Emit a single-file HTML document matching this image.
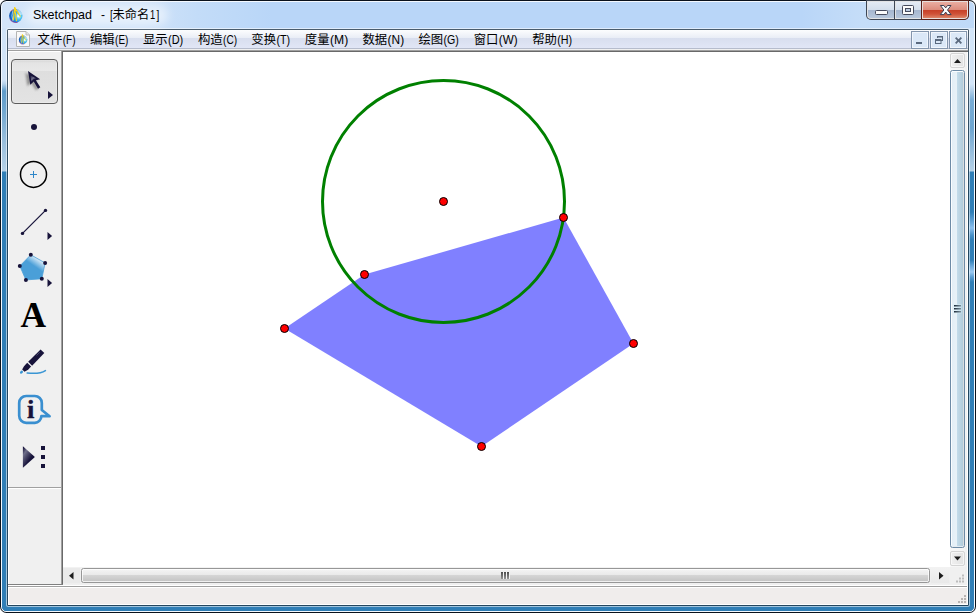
<!DOCTYPE html>
<html><head><meta charset="utf-8"><title>Sketchpad</title>
<style>
html,body{margin:0;padding:0;background:#fff;}
body{width:976px;height:613px;overflow:hidden;position:relative;font-family:"Liberation Sans",sans-serif;font-size:12px;color:#000;}
div,span,svg{position:absolute;box-sizing:border-box;}
.cj{overflow:visible;}
#win{left:0;top:0;width:976px;height:613px;border-radius:6.5px;background:#0a121c;overflow:hidden;}
#hl{left:1px;top:1px;width:974px;height:611px;border-radius:5.5px;background:#f4f9ff;overflow:hidden;}
#glass{left:2px;top:2px;width:972px;height:609px;border-radius:4.5px;overflow:hidden;
 background:linear-gradient(to right,#d3e5f9 0,#d0e3f9 140px,#c3dcf8 195px,#b9d6f8 270px,#b9d6f8 800px,#c5ddf8 860px,#bfd9f7 100%);}
#gl-l{left:0;top:26px;width:5px;height:583px;
 background:linear-gradient(to bottom,#d0e3f7 0px,#d0e3f7 52px,#b5d1ea 56px,#5f9bc9 63px,#6ea5cf 80px,#95bcdb 110px,#b5d1e7 143px,#2f7eb6 144px,#2f7eb6 100%);}
#gl-r{left:967px;top:26px;width:5px;height:583px;
 background:linear-gradient(to bottom,#d3e5f8 0px,#d3e5f8 56px,#b5d1ea 62px,#79add6 72px,#6fa6d0 100px,#95bcdb 122px,#b5d1e7 143px,#2f7eb6 144px,#2f7eb6 184px,#5a9dd2 192px,#8cc0ee 200px,#4a92c9 207px,#2f7eb6 212px,#2f7eb6 232px,#6aa8da 238px,#9ccaf2 244px,#5a9dd2 249px,#2f7eb6 254px,#2f7eb6 100%);}
#gl-b{left:0;top:603px;width:972px;height:6px;background:#2f7eb6;}
#inner-hl{left:6px;top:28px;width:964px;height:579px;border-radius:2.5px;background:rgba(255,255,255,.55);}
#client-w{left:8px;top:30px;width:960px;height:575px;background:#fff;}
#inner-dk{left:7px;top:29px;width:962px;height:577px;border-radius:1.5px;background:linear-gradient(to bottom,#4a5c6c 0,#3d5468 60px,#24465e 143px);}
#client{left:8px;top:30px;width:959px;height:574px;background:#f0f0f0;overflow:hidden;}
/* title */
#ttl{left:33px;top:6px;height:18px;line-height:18px;font-size:12.4px;white-space:pre;color:#000;transform-origin:0 0;}
.glow{left:26px;top:5px;width:142px;height:20px;border-radius:10px;background:rgba(255,255,255,.5);filter:blur(5px);}
/* menu (coords relative to body) */
#menubar{left:8px;top:30px;width:960px;height:18px;background:linear-gradient(to bottom,#fcfdfe 0,#e9edf6 8px,#d8deee 8px,#e1e6f6 18px);}
#mb1{left:8px;top:48px;width:960px;height:1px;background:#b6bccc;}
#mb2{left:8px;top:49px;width:960px;height:1px;background:#f0f0f0;}
#mb3{left:8px;top:50px;width:960px;height:1px;background:#a0a0a0;}
.ml{top:31px;height:16px;line-height:16px;font-size:12px;white-space:pre;transform-origin:0 0;}
.mdi{top:31px;width:18px;height:18px;border:1px solid #8496ad;background:#dbe8f7;box-shadow:inset 0 0 0 1px rgba(255,255,255,.6);}
/* toolbar */
#tb{left:8px;top:51px;width:53px;height:533px;background:#f0f0f0;border-top:1px solid #fff;border-left:1px solid #fff;}
#tb-r1{left:61px;top:51px;width:1px;height:534px;background:#a0a0a0;}
#tb-r2{left:62px;top:51px;width:1px;height:534px;background:#696969;}
#tb-b{left:8px;top:584px;width:55px;height:1px;background:#808080;}
#cv-t{left:62px;top:51px;width:906px;height:1px;background:#696969;}
#canvas{left:63px;top:52px;width:887px;height:516px;background:#fff;}
#vs{left:950px;top:52px;width:17px;height:516px;background:#f4f4f4;}
#hs{left:63px;top:568px;width:887px;height:17px;background:#f0f0f0;}
#sb-corner{left:950px;top:568px;width:18px;height:17px;background:#f0f0f0;}
#rstrip{left:967px;top:52px;width:1px;height:533px;background:#f0f0f0;}
#l585{left:8px;top:585px;width:959px;height:1px;background:#fff;}
#l586{left:8px;top:586px;width:959px;height:1px;background:#a0a0a0;}
#status{left:8px;top:587px;width:959px;height:17px;background:#f0edec;border-top:1px solid #fff;border-left:1px solid #fff;}
/* caption buttons */
#cap{left:866px;top:0;width:103px;height:20px;border-radius:0 0 5px 5px;background:#3d4654;}
#cap-hl{left:867px;top:1px;width:101px;height:18px;border-radius:0 0 4px 4px;background:rgba(255,255,255,.85);}
.cb{top:2px;height:16px;}
#cb-min{left:868px;width:26px;border-radius:0 0 0 3px;background:linear-gradient(to bottom,#e3eaf4 0,#d3deec 8px,#a5b6cf 8px,#b7c7dc 16px);}
#cb-max{left:896px;width:25px;background:linear-gradient(to bottom,#e3eaf4 0,#d3deec 8px,#a5b6cf 8px,#b7c7dc 16px);}
#cb-cls{left:923px;width:44px;border-radius:0 0 3px 0;background:linear-gradient(to bottom,#eaada1 0,#dc8b7c 8px,#c63f27 8px,#cf5238 12px,#dc8468 16px);}
.csep{top:1px;width:1px;height:18px;background:#3d4654;}
#selbtn{left:11px;top:59px;width:47px;height:45px;border:1px solid #5c5c5c;border-radius:4px;
 background:linear-gradient(to bottom,#d4d4d4 0,#e4e4e4 3px,#e8e8e8 11px,#dedede 11px,#e3e3e3 43px);box-shadow:inset 0 0 0 1px rgba(255,255,255,.25);}
#tbsep1{left:8px;top:487px;width:53px;height:1px;background:#a0a0a0;}
#tbsep2{left:8px;top:488px;width:53px;height:1px;background:#fff;}
/* scrollbars */
#vs{left:950px;top:52px;width:17px;height:515px;background:linear-gradient(to right,#f8f8f8 0,#f4f4f4 14px,#f0f0f0 17px);}
#hs{left:63px;top:567px;width:887px;height:18px;background:linear-gradient(to bottom,#f2f2f2 0,#eeeeee 16px,#f0f0f0 18px);}
#sb-corner{left:950px;top:567px;width:17px;height:18px;background:#f0f0f0;}
#rstrip{left:967px;top:52px;width:1px;height:533px;background:#fff;}
.sbtn{border:1px solid #d4d4d4;border-radius:2px;background:linear-gradient(to bottom,#f0f0f0,#e4e4e4);box-shadow:inset 0 0 0 1px rgba(255,255,255,.6);}
#vup{left:950px;top:53px;width:15px;height:15px;background:linear-gradient(to right,#f0f0f0,#e2e2e2);}
#vdn{left:950px;top:551px;width:15px;height:15px;background:linear-gradient(to right,#f0f0f0,#e2e2e2);}
#vth{left:950px;top:70px;width:15px;height:478px;border:1px solid #6e8ba6;border-radius:2.5px;
 background:linear-gradient(to right,#fafdff 0,#fafdff 1px,#e3eef6 1px,#e9f2f8 6px,#c4dcea 6px,#b2cbda 12px,#d9dde0 12px);box-shadow:inset 0 1px 0 0 #fafdff,inset 0 -1px 0 0 #e4ecf2;}
#hlft{left:63px;top:568px;width:17px;height:15px;background:#eaeaea;}
#hrgt{left:931px;top:568px;width:18px;height:15px;background:linear-gradient(to bottom,#f2f2f2,#e9e9e9);}
#hth{left:81px;top:568px;width:849px;height:15px;border:1px solid #979797;border-radius:2.5px;
 background:linear-gradient(to bottom,#f4f4f4 0,#e9e9e9 6px,#d6d6d6 6px,#c2c2c2 13px);box-shadow:inset 0 0 0 1px rgba(255,255,255,.75);}
#cap-cl{left:921px;top:0;width:48px;height:20px;border-radius:0 0 5px 0;background:#5c2118;}

</style></head>
<body>
<div id="win"></div>
<div id="hl"></div>
<div id="glass"><div id="gl-l"></div><div id="gl-r"></div><div id="gl-b"></div></div>
<div id="inner-hl"></div>
<div id="inner-dk"></div>
<div id="client-w"></div><div id="client"></div>
<div id="cap"></div><div id="cap-cl"></div><div id="cap-hl"></div>
<div class="cb" id="cb-min"></div><div class="cb" id="cb-max"></div><div class="cb" id="cb-cls"></div>
<div class="csep" style="left:894px"></div><div class="csep" style="left:921px;background:#5a2018"></div>
<svg style="left:866px;top:0" width="103" height="20" viewBox="866 0 103 20">
<rect x="875.5" y="10.5" width="12" height="4" rx="1" fill="#fbfbfb" stroke="#454a5c" stroke-width="1"/>
<rect x="902.5" y="5.5" width="11" height="9" rx="1" fill="#fbfbfb" stroke="#454a5c" stroke-width="1"/>
<rect x="905.5" y="8.5" width="5" height="3" fill="#b9c9de" stroke="#454a5c" stroke-width="1"/>
<path d="M940.400 5.500h3.500l1.800 2.400 1.800-2.400h3.500l-3.500 4.500 3.600 4.600h-3.600l-1.800-2.500-1.800 2.500h-3.600l3.600-4.600z" fill="#fbfbfb" stroke="#3c3f52" stroke-width="1" stroke-linejoin="round"/>
</svg>
<svg id="appicon" style="left:8px;top:6px" width="16" height="18" viewBox="8 6 16 18">
<defs><radialGradient id="ig" cx="0.72" cy="0.55" r="0.8"><stop offset="0" stop-color="#f4fcff"/><stop offset="0.25" stop-color="#4cc6f3"/><stop offset="0.6" stop-color="#1a7fd6"/><stop offset="1" stop-color="#0a47a6"/></radialGradient>
</defs>
<g>
<circle cx="15.800" cy="15.700" r="6.700" fill="url(#ig)"/>
<path d="M16.500 9.100A6.700 6.700 0 0 1 22.400 14.600L19.500 15.500z" fill="#fff" opacity=".55"/>
<path d="M12.900 10.300Q10.900 15.500 13 21" stroke="#fff" stroke-width=".9" fill="none" opacity=".6"/>
<path d="M9.700 18.400A6.700 6.700 0 0 0 17.600 22.200" stroke="#8a3f9e" stroke-width="1.100" fill="none" opacity=".85"/>
<path d="M10.400 11.700A6.700 6.700 0 0 1 12.800 9.700" stroke="#e8665a" stroke-width="1" fill="none" opacity=".85"/>
<path d="M14.600 7.600L13.400 19.600M14.900 9.500L16.500 20.700M15.300 8.600L20.200 16.200" stroke="#f7d31c" stroke-width="1.150" stroke-linecap="round" fill="none"/>
<path d="M14.200 7.300l1.300.3.600 2.300-1.600.300z" fill="#f7d31c"/>
<path d="M17.300 13.600l2 3.300-1.800.2z" fill="#fff" opacity=".95"/>
</g>
</svg>
<div class="glow"></div>
<div id="menubar"></div><div id="mb1"></div><div id="mb2"></div><div id="mb3"></div>
<svg id="txt" style="left:0;top:0" width="976" height="613" viewBox="0 0 976 613" font-family='"Liberation Sans", "Noto Sans CJK SC", sans-serif' fill="#000">
<text x="37.6" y="44" textLength="24.7" lengthAdjust="spacingAndGlyphs" font-size="12.4">文件</text>
<text x="62.8" y="44" textLength="12.7" lengthAdjust="spacingAndGlyphs" font-size="12.4" >(F)</text>
<text x="89.9" y="44" textLength="24.7" lengthAdjust="spacingAndGlyphs" font-size="12.4">编辑</text>
<text x="115.1" y="44" textLength="13.2" lengthAdjust="spacingAndGlyphs" font-size="12.4" >(E)</text>
<text x="142.9" y="44" textLength="24.7" lengthAdjust="spacingAndGlyphs" font-size="12.4">显示</text>
<text x="168" y="44" textLength="15.2" lengthAdjust="spacingAndGlyphs" font-size="12.4" >(D)</text>
<text x="197.9" y="44" textLength="24.7" lengthAdjust="spacingAndGlyphs" font-size="12.4">构造</text>
<text x="223.1" y="44" textLength="14" lengthAdjust="spacingAndGlyphs" font-size="12.4" >(C)</text>
<text x="251.3" y="44" textLength="24.7" lengthAdjust="spacingAndGlyphs" font-size="12.4">变换</text>
<text x="276.5" y="44" textLength="13.7" lengthAdjust="spacingAndGlyphs" font-size="12.4" >(T)</text>
<text x="304.8" y="44" textLength="24.7" lengthAdjust="spacingAndGlyphs" font-size="12.4">度量</text>
<text x="330" y="44" textLength="18.2" lengthAdjust="spacingAndGlyphs" font-size="12.4" >(M)</text>
<text x="362.5" y="44" textLength="24.7" lengthAdjust="spacingAndGlyphs" font-size="12.4">数据</text>
<text x="387.6" y="44" textLength="16.5" lengthAdjust="spacingAndGlyphs" font-size="12.4" >(N)</text>
<text x="418.5" y="44" textLength="24.7" lengthAdjust="spacingAndGlyphs" font-size="12.4">绘图</text>
<text x="443.6" y="44" textLength="15.3" lengthAdjust="spacingAndGlyphs" font-size="12.4" >(G)</text>
<text x="473.7" y="44" textLength="24.7" lengthAdjust="spacingAndGlyphs" font-size="12.4">窗口</text>
<text x="498.8" y="44" textLength="18.8" lengthAdjust="spacingAndGlyphs" font-size="12.4" >(W)</text>
<text x="532.2" y="44" textLength="24.7" lengthAdjust="spacingAndGlyphs" font-size="12.4">帮助</text>
<text x="557.3" y="44" textLength="14.9" lengthAdjust="spacingAndGlyphs" font-size="12.4" >(H)</text>
<text x="112.6" y="19.2" textLength="36.7" lengthAdjust="spacingAndGlyphs" font-size="12.4">未命名</text>
<text x="33" y="19.2" textLength="59" lengthAdjust="spacingAndGlyphs" font-size="12.4" >Sketchpad</text>
<text x="100.9" y="19.2" textLength="4" lengthAdjust="spacingAndGlyphs" font-size="12.4" >-</text>
<text x="109.9" y="19.2" textLength="2.8" lengthAdjust="spacingAndGlyphs" font-size="12.4" >[</text>
<text x="150" y="19.2" textLength="5.2" lengthAdjust="spacingAndGlyphs" font-size="12.4" >1</text>
<text x="156.5" y="19.2" textLength="2.8" lengthAdjust="spacingAndGlyphs" font-size="12.4" >]</text></svg>
<div class="mdi" style="left:911px"></div><div class="mdi" style="left:930px"></div><div class="mdi" style="left:949px"></div>
<svg id="mdig" style="left:8px;top:30px" width="960" height="20" viewBox="8 30 960 20">
<g fill="#5b6a7e"><rect x="916" y="42" width="6" height="2"/>
<path d="M937 36h6v5h-1.500v-1h.5v-2.500h-4v.5h-1zM935 39h6.500v5h-6.500zM936 41v2h4.500v-2z" fill-rule="evenodd"/>
<path d="M955 38.300l1.300-1.300 2.200 2.200 2.200-2.200 1.300 1.300-2.200 2.200 2.200 2.200-1.300 1.300-2.200-2.200-2.200 2.200-1.300-1.300 2.200-2.200z"/></g>
<path d="M16.500 31.500h9.500l3.500 3.500v11.500h-13z" fill="#f9f9f9" stroke="#b4b4b4" stroke-width="1"/>
<path d="M26 31.500v3.500h3.500" fill="#e4e4e4" stroke="#b4b4b4" stroke-width=".8"/>
<g transform="translate(23.100 39.800) scale(.64) translate(-15.800 -15.700)">
<circle cx="15.800" cy="15.700" r="6.700" fill="url(#ig)"/>
<path d="M16.500 9.100A6.700 6.700 0 0 1 22.400 14.600L19.500 15.500z" fill="#fff" opacity=".55"/>
<path d="M12.900 10.300Q10.900 15.500 13 21" stroke="#fff" stroke-width=".9" fill="none" opacity=".6"/>
<path d="M9.700 18.400A6.700 6.700 0 0 0 17.600 22.200" stroke="#8a3f9e" stroke-width="1.100" fill="none" opacity=".85"/>
<path d="M10.400 11.700A6.700 6.700 0 0 1 12.800 9.700" stroke="#e8665a" stroke-width="1" fill="none" opacity=".85"/>
<path d="M14.600 7.600L13.400 19.600M14.900 9.500L16.500 20.700M15.300 8.600L20.200 16.200" stroke="#f7d31c" stroke-width="1.150" stroke-linecap="round" fill="none"/>
<path d="M14.200 7.300l1.300.3.600 2.300-1.600.300z" fill="#f7d31c"/>
<path d="M17.300 13.600l2 3.300-1.800.2z" fill="#fff" opacity=".95"/>
</g>
</svg>
<div id="tb"></div><div id="tb-r1"></div><div id="tb-r2"></div><div id="tb-b"></div>
<div id="selbtn"></div><div id="tbsep1"></div><div id="tbsep2"></div>
<svg id="tools" style="left:8px;top:52px" width="53" height="440" viewBox="8 52 53 440">
<defs>
<linearGradient id="ah" x1="0" y1="0" x2="1" y2="1"><stop offset="0" stop-color="#17133a"/><stop offset=".45" stop-color="#8d8da3"/><stop offset=".8" stop-color="#17133a"/></linearGradient>
<linearGradient id="pg" x1="0.78" y1="0.12" x2="0.5" y2="0.52"><stop offset="0" stop-color="#f4f9fd"/><stop offset=".35" stop-color="#a9d2ee"/><stop offset=".8" stop-color="#4a9fd8"/></linearGradient>
<linearGradient id="tg" x1="0.1" y1="0" x2="0.6" y2="0.6"><stop offset="0" stop-color="#17133a"/><stop offset=".35" stop-color="#6f6f8a"/><stop offset="1" stop-color="#17133a"/></linearGradient>
<filter id="sh" x="-50%" y="-50%" width="200%" height="200%"><feGaussianBlur stdDeviation="1.1"/></filter>
</defs>
<!-- arrow -->
<path d="M27 72l2 13.500 3.600-3.600 5 7.600 2.600-1.800-5-7.400 4.600-1.200z" fill="#444" opacity=".5" filter="url(#sh)" transform="translate(-1.600 .8)"/>
<path d="M28 71l2.300 13.800 3.400-3.300 4.300 7.300 2.300-1.500-4.400-7.100 4.200-.9z" fill="#17133a"/>
<path d="M30.300 75.400l1.200 6 2-2.100 3-.7z" fill="url(#ah)" opacity=".75"/>
<path d="M48 91v8l5-4z" fill="#17133a"/>
<!-- point -->
<circle cx="34" cy="127" r="3" fill="#17133a"/>
<!-- compass -->
<circle cx="33.5" cy="174.4" r="13" fill="none" stroke="#000" stroke-width="1.5"/>
<path d="M30 174.5h7M33.5 171v7" stroke="#2e86c8" stroke-width="1" fill="none"/>
<!-- line -->
<path d="M22.5 233.4L45.5 210.4" stroke="#17133a" stroke-width="1.2"/>
<circle cx="22.5" cy="233.4" r="1.7" fill="#17133a"/><circle cx="45.5" cy="210.4" r="1.7" fill="#17133a"/>
<path d="M47.500 232v8l4.600-4z" fill="#17133a"/>
<!-- polygon -->
<path d="M30.8 254.8L45.1 262.9 41.8 278.800 25.9 279.900 19.8 266z" fill="url(#pg)" stroke="#4a9fd8" stroke-width=".8"/>
<g fill="#17133a"><circle cx="30.8" cy="254.8" r="2"/><circle cx="45.1" cy="262.9" r="2"/><circle cx="41.8" cy="278.8" r="2"/><circle cx="25.9" cy="279.9" r="2"/><circle cx="19.8" cy="266" r="2"/></g>
<path d="M47.500 279v8l4.600-4z" fill="#17133a"/>
<!-- text A -->
<text x="20.6" y="326.9" font-family="Liberation Serif, serif" font-weight="bold" font-size="35.5" textLength="25.6" lengthAdjust="spacingAndGlyphs" fill="#000">A</text>
<!-- marker -->
<path d="M40.600 349.400l3.700 3.700-12.200 12.600-3.900-3.900z" fill="#17133a"/>
<path d="M36.500 355.500l3.200-3.300" stroke="#55557a" stroke-width=".8"/>
<path d="M27.200 362.800l3.900 3.800-3 3.200-3.600 1.900-2.300-2.200 1.800-3.300z" fill="#17133a"/>
<ellipse cx="21.5" cy="372.2" rx="1.7" ry="1.3" transform="rotate(-45 21.5 372.2)" fill="#3a96d4"/>
<path d="M27.200 373c6 .6 14 .4 18.200-2.400" stroke="#3a96d4" stroke-width="1.6" fill="none" stroke-linecap="round"/>
<!-- info -->
<path d="M26.200 396h8.600a7 7 0 0 1 7 7v7l7.800 6.200h-8.200a7 7 0 0 1-6.600 6.600h-8.600a7 7 0 0 1-7-7v-12.800a7 7 0 0 1 7-7z" fill="none" stroke="#3a8fd0" stroke-width="2.700" stroke-linejoin="round"/>
<text x="27.100" y="417.600" font-family="Liberation Serif, serif" font-weight="bold" font-size="24.600" textLength="7.400" lengthAdjust="spacingAndGlyphs" fill="#17133a" stroke="#17133a" stroke-width=".35">i</text>
<!-- custom tool -->
<path d="M22.900 446.200v21.500l12-10.700z" fill="url(#tg)"/>
<g fill="#17133a"><rect x="41" y="446" width="4" height="4"/><rect x="41" y="455" width="4" height="4"/><rect x="41" y="464" width="4" height="4"/></g>
</svg>
<div id="cv-t"></div>
<div id="canvas"></div>
<div id="vs"></div><div id="hs"></div><div id="sb-corner"></div><div id="rstrip"></div>
<div class="sbtn" id="vup"></div><div class="sbtn" id="vdn"></div><div id="vth"></div>
<div id="hlft"></div><div id="hrgt"></div><div id="hth"></div>
<svg id="sbg" style="left:63px;top:52px" width="905" height="553" viewBox="63 52 905 553">
<defs><linearGradient id="gv" x1="0" y1="0" x2="0" y2="1"><stop offset="0" stop-color="#222"/><stop offset="1" stop-color="#8a8a8a"/></linearGradient>
<linearGradient id="gv2" x1="0" y1="0" x2="1" y2="0"><stop offset="0" stop-color="#1a2a38"/><stop offset="1" stop-color="#7a8e9c"/></linearGradient></defs>
<path d="M954 63l3.500-4 3.500 4z" fill="#1c1c1c"/>
<path d="M954 556.500h7l-3.500 4z" fill="#1c1c1c"/>
<path d="M73.500 572v7.500l-4.500-3.700z" fill="#1c1c1c"/>
<path d="M939 572v7.500l4.500-3.700z" fill="#1c1c1c"/>
<g><rect x="501.2" y="572" width="1.6" height="7" fill="url(#gv)"/><rect x="504.2" y="572" width="1.6" height="7" fill="url(#gv)"/><rect x="507.2" y="572" width="1.6" height="7" fill="url(#gv)"/>
<rect x="503" y="572" width="1" height="7" fill="#f4f4f4"/><rect x="506" y="572" width="1" height="7" fill="#f4f4f4"/><rect x="509" y="572" width="1" height="7" fill="#f4f4f4"/></g>
<g><rect x="953.500" y="304" width="8" height="9.500" fill="#d8eef8" opacity=".55"/><rect x="954" y="305" width="7" height="1.500" fill="url(#gv2)"/><rect x="954" y="308" width="7" height="1.500" fill="url(#gv2)"/><rect x="954" y="311" width="7" height="1.500" fill="url(#gv2)"/></g>
<!-- size grips -->
<g fill="#bdbdbd" transform="translate(0 -.5)"><rect x="962" y="575" width="2" height="2"/><rect x="959" y="578" width="2" height="2"/><rect x="962" y="578" width="2" height="2"/><rect x="956" y="581" width="2" height="2"/><rect x="959" y="581" width="2" height="2"/><rect x="962" y="581" width="2" height="2"/></g>
</svg>
<div id="l585"></div><div id="l586"></div><div id="status"></div>
<svg style="left:950px;top:590px" width="18" height="15" viewBox="950 590 18 15"><g fill="#b8b4b2"><rect x="964" y="595" width="2" height="2"/><rect x="961" y="598" width="2" height="2"/><rect x="964" y="598" width="2" height="2"/><rect x="958" y="601" width="2" height="2"/><rect x="961" y="601" width="2" height="2"/><rect x="964" y="601" width="2" height="2"/></g>
</svg>
<svg id="geo" style="left:63px;top:52px" width="887" height="516" viewBox="63 52 887 516">
<polygon points="284.5,328.5 364.5,274.5 563.5,217.5 633.5,343.5 481.5,446.5" fill="#8080ff"/>
<circle cx="443.5" cy="201.5" r="121" fill="none" stroke="#008000" stroke-width="3"/>
<g fill="#ff0000" stroke="#000" stroke-width="1">
<circle cx="443.5" cy="201.5" r="4"/><circle cx="563.5" cy="217.5" r="4"/><circle cx="364.5" cy="274.5" r="4"/>
<circle cx="284.5" cy="328.5" r="4"/><circle cx="633.5" cy="343.5" r="4"/><circle cx="481.5" cy="446.5" r="4"/>
</g>
</svg>

</body></html>
